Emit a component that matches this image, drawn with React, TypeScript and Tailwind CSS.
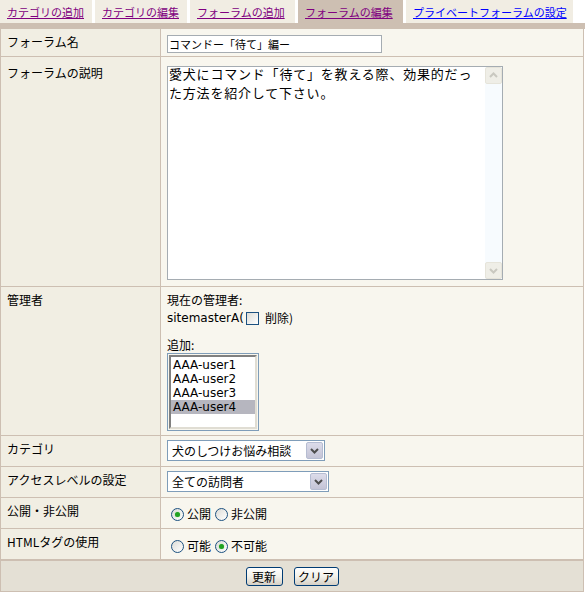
const font = "font-['Noto_Sans_CJK_JP','Noto_Sans',sans-serif]";

const tabs = [
  { label: "カテゴリの追加", w: "w-[92px]", active: false, visited: true },
  { label: "カテゴリの編集", w: "w-[92px]", active: false, visited: true },
  { label: "フォーラムの追加", w: "w-[105px]", active: false, visited: true },
  { label: "フォーラムの編集", w: "w-[105px]", active: true, visited: true },
  { label: "プライベートフォーラムの設定", w: "w-[167px]", active: false, visited: false },
];

const Chevron = ({ color = "#4d4d4d" }: { color?: string }) => (
  <svg width="9" height="6" viewBox="0 0 9 6">
    <path d="M1 1 L4.5 4.5 L8 1" fill="none" stroke={color} strokeWidth="2" />
  </svg>
);

const Radio = ({ checked }: { checked?: boolean }) => (
  <span className="w-[13px] h-[13px] rounded-full border border-[#1c5180] bg-gradient-to-br from-[#dcdcd7] to-white flex items-center justify-center shrink-0">
    {checked && <span className="w-[5px] h-[5px] rounded-full bg-[#21a121] shadow-[0_0_1px_#6ad66a]" />}
  </span>
);

const Select = ({ value, w }: { value: string; w: string }) => (
  <div className={`${w} h-[21px] border border-[#7f9db9] bg-white flex items-center`}>
    <span className="flex-1 pl-[4px] text-[12px] leading-[14px] whitespace-nowrap">{value}</span>
    <span className="w-[17px] h-[17px] mr-[1px] rounded-[2px] border border-[#b6bdd2] bg-gradient-to-b from-[#dcdcea] to-[#c4c4d6] flex items-center justify-center">
      <Chevron />
    </span>
  </div>
);

const Button = ({ label, w }: { label: string; w: string }) => (
  <button className={`${w} h-[19px] rounded-[3px] border border-[#003c74] bg-gradient-to-b from-white via-[#f2f1ea] to-[#d6d0c5] text-[12px] leading-[14px] text-black flex items-center justify-center`}>
    {label}
  </button>
);

const Row = ({ label, h, lpt, children, last }: { label: string; h: string; lpt: string; children: React.ReactNode; last?: boolean }) => (
  <div className={`flex ${h} ${last ? "" : "border-b"} border-[#cdbfb2]`}>
    <div className={`w-[160px] shrink-0 bg-[#f1eee3] border-r border-[#cdbfb2] pl-[6px] ${lpt} text-[12px] leading-[16px]`}>{label}</div>
    <div className="flex-1 bg-[#f8f6ee] pl-[6px]">{children}</div>
  </div>
);

export default function App() {
  return (
    <div className={`w-[585px] h-[592px] bg-white text-black ${font}`}>
      {/* tabs */}
      <div className="flex h-[23px] gap-[3px]">
        {tabs.map((t) => (
          <div
            key={t.label}
            className={`${t.w} h-full pl-[7px] flex items-center text-[11px] leading-[14px] underline whitespace-nowrap ${t.active ? "bg-[#cdbfb2]" : "bg-[#f1ede3]"} ${t.visited ? "text-[#800080]" : "text-[#0000ff]"}`}
          >
            {t.label}
          </div>
        ))}
      </div>
      <div className="h-[6px] bg-[#cdbfb2] w-[585px]" />

      {/* form table */}
      <div className="w-[584px] border-l border-r border-b border-[#cdbfb2]">
        <Row label="フォーラム名" h="h-[28px]" lpt="pt-[5px]">
          <div className="pt-[6px]">
            <div className="w-[215px] h-[18px] border border-[#a5acb2] bg-white pl-[1px] text-[11px] leading-[16px] whitespace-nowrap">コマンドー「待て」編ー</div>
          </div>
        </Row>

        <Row label="フォーラムの説明" h="h-[230px]" lpt="pt-[8px]">
          <div className="pt-[9px]">
            <div className="w-[336px] h-[214px] border border-[#a5acb2] bg-white flex">
              <div className="flex-1 pl-[1px] -mt-[3px] text-[13px] leading-[19px] tracking-[0.8px]">
                <div>愛犬にコマンド「待て」を教える際、効果的だっ</div>
                <div>た方法を紹介して下さい。</div>
              </div>
              <div className="w-[17px] h-full bg-[#f7fbfe] flex flex-col justify-between">
                <div className="h-[17px] rounded-[2px] border border-[#e6e4da] bg-[#efeee7] flex items-center justify-center rotate-180">
                  <Chevron color="#c9c8c0" />
                </div>
                <div className="h-[17px] rounded-[2px] border border-[#e6e4da] bg-[#efeee7] flex items-center justify-center">
                  <Chevron color="#c9c8c0" />
                </div>
              </div>
            </div>
          </div>
        </Row>

        <Row label="管理者" h="h-[149px]" lpt="pt-[5px]">
          <div className="pt-[5px] text-[12px] leading-[16px]">
            <div>現在の管理者:</div>
            <div className="mt-[2px] flex items-center h-[16px]">
              <span className="font-['DejaVu_Sans',sans-serif]">sitemasterA(</span>
              <span className="ml-[2px] w-[13px] h-[13px] border border-[#1c5180] bg-gradient-to-br from-[#dcdcd7] to-white" />
              <span className="ml-[6px]">削除)</span>
            </div>
            <div className="mt-[11px]">追加:</div>
            <div className="w-[92px] h-[78px] border border-[#7f9db9] p-[1px]">
              <div className="w-full h-full border-2 border-t-[#808080] border-l-[#808080] border-r-[#e0ddd3] border-b-[#e0ddd3] bg-white font-['DejaVu_Sans',sans-serif] text-[12px] leading-[14px] pt-[1px]">
                {["AAA-user1", "AAA-user2", "AAA-user3", "AAA-user4"].map((u, i) => (
                  <div key={u} className={`h-[14px] pl-[2px] ${i === 3 ? "bg-[#b6b6bf]" : ""}`}>{u}</div>
                ))}
              </div>
            </div>
          </div>
        </Row>

        <Row label="カテゴリ" h="h-[31px]" lpt="pt-[5px]">
          <div className="pt-[4px]"><Select value="犬のしつけお悩み相談" w="w-[158px]" /></div>
        </Row>

        <Row label="アクセスレベルの設定" h="h-[31px]" lpt="pt-[5px]">
          <div className="pt-[4px]"><Select value="全ての訪問者" w="w-[162px]" /></div>
        </Row>

        <Row label="公開・非公開" h="h-[31px]" lpt="pt-[5px]">
          <div className="pt-[9px] pl-[4px] flex items-center text-[12px] leading-[14px]">
            <Radio checked />
            <span className="ml-[3px]">公開</span>
            <span className="ml-[4px]"><Radio /></span>
            <span className="ml-[3px]">非公開</span>
          </div>
        </Row>

        <Row label="HTMLタグの使用" h="h-[31px]" lpt="pt-[5px]">
          <div className="pt-[10px] pl-[4px] flex items-center text-[12px] leading-[14px]">
            <Radio />
            <span className="ml-[3px]">可能</span>
            <span className="ml-[4px]"><Radio checked /></span>
            <span className="ml-[3px]">不可能</span>
          </div>
        </Row>

        <div className="h-[31px] bg-[#e4e0d5] border-t border-[#cdbfb2] flex items-center justify-center gap-[11px] pt-[1px]">
          <Button label="更新" w="w-[37px]" />
          <Button label="クリア" w="w-[45px]" />
        </div>
      </div>
    </div>
  );
}
